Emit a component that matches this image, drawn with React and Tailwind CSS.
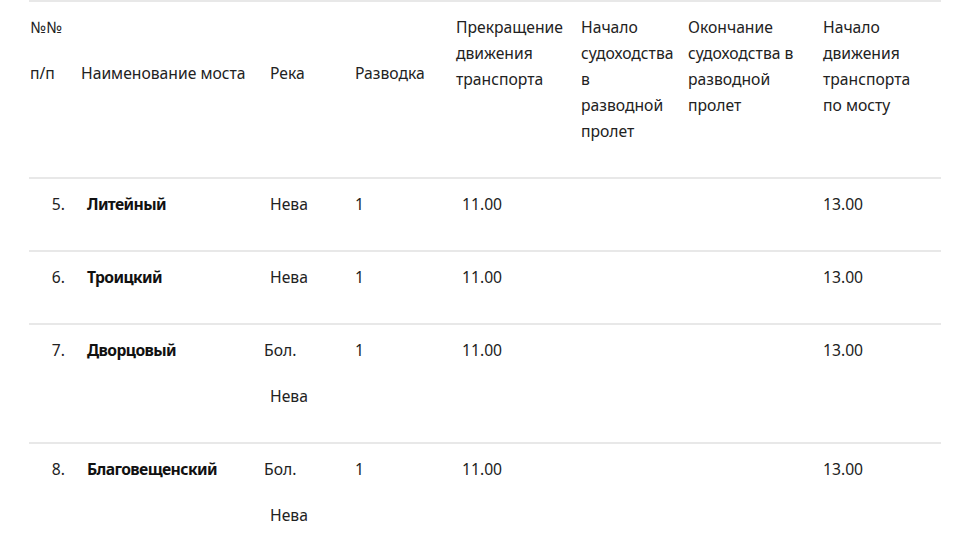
import React from "react";

const cols = "grid grid-cols-[52px_178px_86px_101px_125px_107px_135px_128px]";

const rows = [
  { n: "5.", name: "Литейный", river: ["Нева"], r: "1", stop: "11.00", start: "13.00" },
  { n: "6.", name: "Троицкий", river: ["Нева"], r: "1", stop: "11.00", start: "13.00" },
  { n: "7.", name: "Дворцовый", river: ["Бол.", "Нева"], r: "1", stop: "11.00", start: "13.00" },
  { n: "8.", name: "Благовещенский", river: ["Бол.", "Нева"], r: "1", stop: "11.00", start: "13.00" },
];

const App = () => {
  return (
    <main
      className="min-h-screen bg-white text-[#222] text-[15.7px] leading-[26px]"
      style={{ fontFamily: "'Noto Sans', 'Open Sans', sans-serif" }}
    >
      <div className="ml-[29px] w-[912px] border-t-2 border-[#e8e8e8]">
        {/* header */}
        <div className={`${cols} h-[177px] border-b-2 border-[#e8e8e8]`}>
          <div className="pl-[1px] pt-[12px]">
            <p className="mb-[20px]">№№</p>
            <p>п/п</p>
          </div>
          <div className="pt-[58px] whitespace-nowrap">Наименование моста</div>
          <div className="pl-[11px] pt-[58px]">Река</div>
          <div className="pl-[10px] pt-[58px]">Разводка</div>
          <div className="pl-[10px] pt-[12px] whitespace-nowrap">
            Прекращение
            <br />
            движения
            <br />
            транспорта
          </div>
          <div className="pl-[10px] pt-[12px] whitespace-nowrap">
            Начало
            <br />
            судоходства
            <br />в
            <br />
            разводной
            <br />
            пролет
          </div>
          <div className="pl-[10px] pt-[12px] whitespace-nowrap">
            Окончание
            <br />
            судоходства в
            <br />
            разводной
            <br />
            пролет
          </div>
          <div className="pl-[10px] pt-[12px] whitespace-nowrap">
            Начало
            <br />
            движения
            <br />
            транспорта
            <br />
            по мосту
          </div>
        </div>

        {rows.map((row) => (
          <div key={row.n} className={`${cols} border-b-2 border-[#e8e8e8] pt-[12px] pb-[13px]`}>
            <div className="pr-[16px] text-right">
              <p className="mb-[20px]">{row.n}</p>
            </div>
            <div className="pl-[6px] font-bold text-[#111] tracking-[-0.6px] whitespace-nowrap">
              <p className="mb-[20px]">{row.name}</p>
            </div>
            <div className="pl-[11px]">
              {row.river.map((t) => (
                <p key={t} className={`mb-[20px] ${t === "Бол." ? "-ml-[6px]" : ""}`}>
                  {t}
                </p>
              ))}
            </div>
            <div className="pl-[10px]">
              <p className="mb-[20px]">{row.r}</p>
            </div>
            <div className="pl-[16px]">
              <p className="mb-[20px]">{row.stop}</p>
            </div>
            <div />
            <div />
            <div className="pl-[10px]">
              <p className="mb-[20px]">{row.start}</p>
            </div>
          </div>
        ))}
      </div>
    </main>
  );
};

export default App;
